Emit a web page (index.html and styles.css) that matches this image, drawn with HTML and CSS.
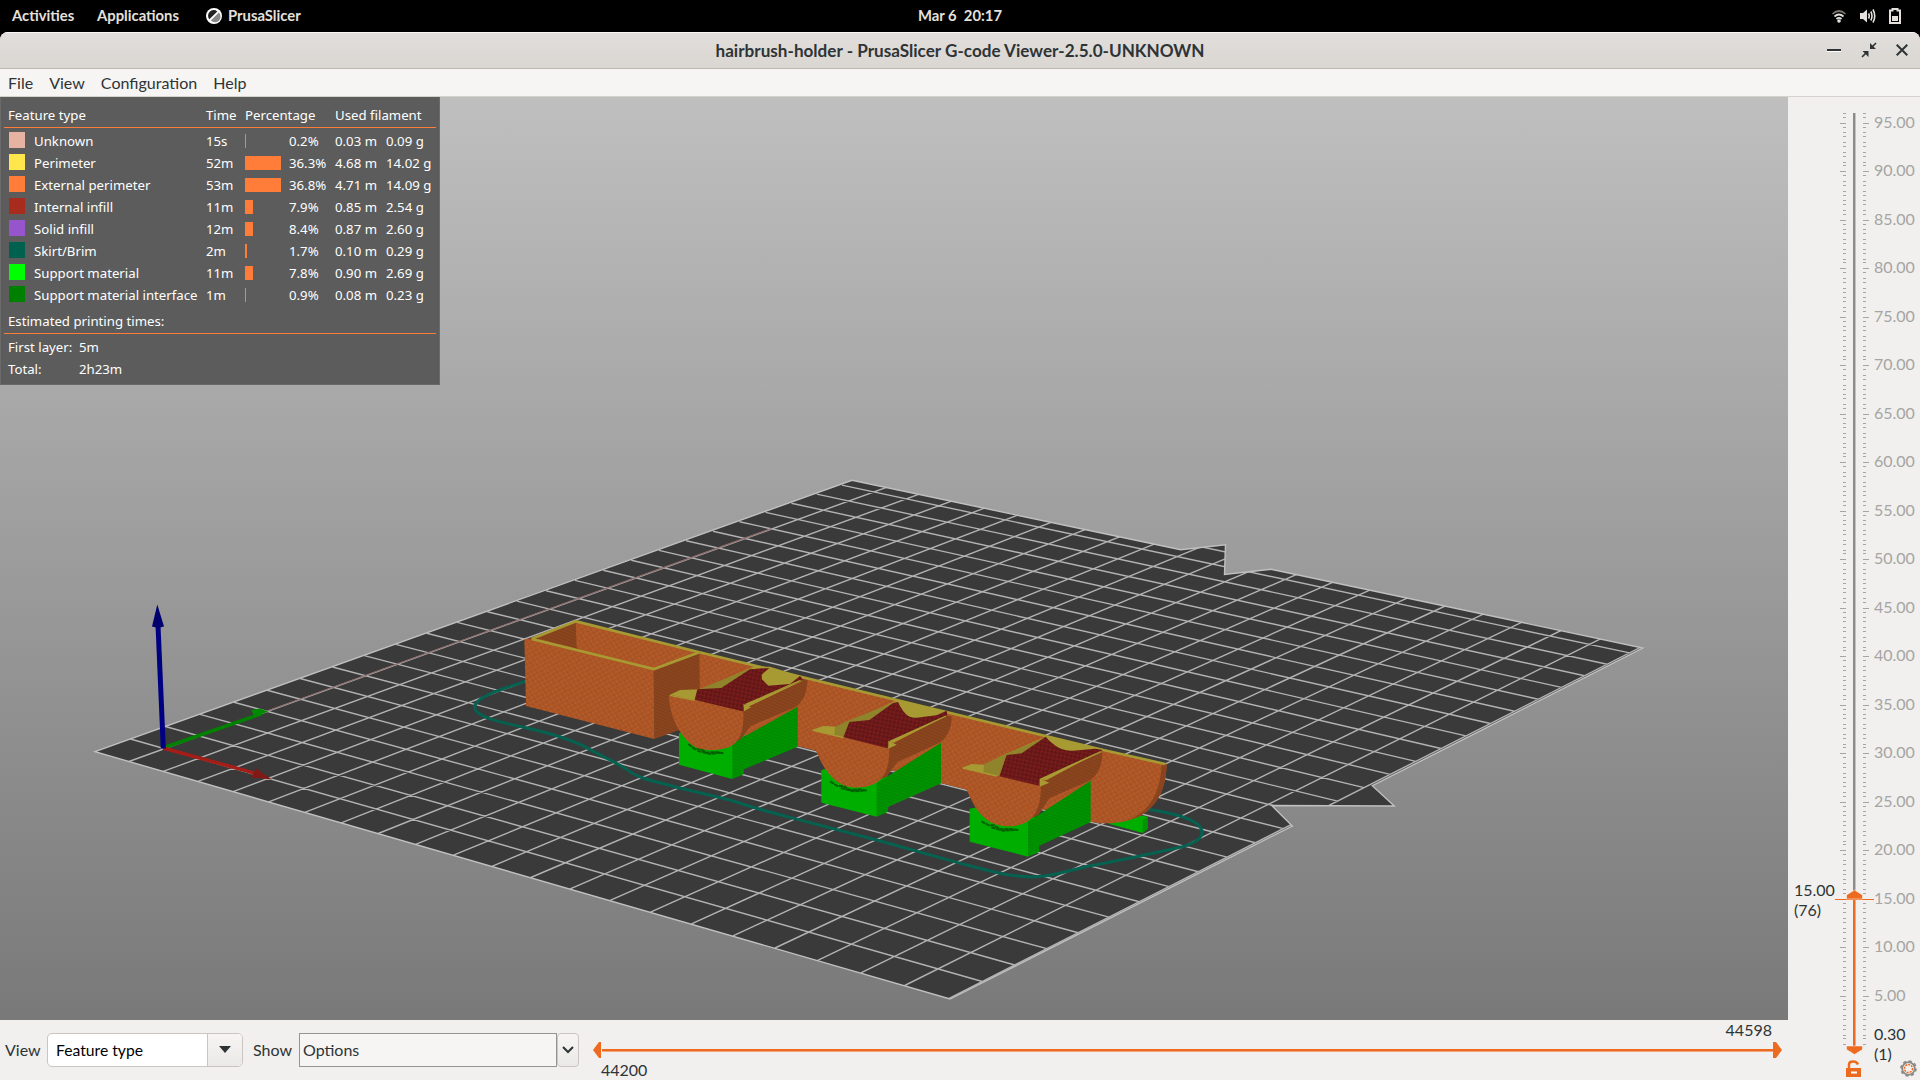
FILE: index.html
```html
<!DOCTYPE html>
<html lang="en">
<head>
<meta charset="utf-8">
<title>hairbrush-holder - PrusaSlicer G-code Viewer</title>
<link rel="stylesheet" href="styles.css">
</head>
<body>
<header class="topbar">
  <nav class="topbar-left">
    <span class="activities">Activities</span>
    <span class="applications">Applications</span>
    <span class="app">
      <svg width="16" height="16" viewBox="0 0 16 16"><circle cx="8" cy="8" r="8" fill="#fff"/><path d="M3.400 11.300A5.600 5.600 0 0 1 11.300 3.400z" fill="#222"/><path d="M4.800 12.600 12.900 4.600A5.600 5.600 0 0 1 4.800 12.600z" fill="#888"/></svg>
      PrusaSlicer</span>
  </nav>
  <div class="clock">Mar 6&nbsp; 20:17</div>
  <div class="tray">
    <svg width="16" height="16" viewBox="0 0 16 16" fill="none" stroke="#e4e0dc" stroke-width="1.7"><path d="M1.500 6Q8 0 14.500 6" stroke="#77736f"/><path d="M3.500 8.500Q8 4.500 12.500 8.500"/><path d="M5.500 11Q8 8.800 10.500 11"/><circle cx="8" cy="13" r="1.800" fill="#e4e0dc" stroke="none"/></svg>
    <svg width="16" height="16" viewBox="0 0 16 16" fill="none" stroke="#e4e0dc" stroke-width="1.600"><path d="M0 5h3L7 1.500v13L3 11H0z" fill="#e4e0dc" stroke="none"/><path d="M8.500 5.500Q10 8 8.500 10.500M10.800 3.500Q13.200 8 10.800 12.500M13 1.500Q16.500 8 13 14.500"/></svg>
    <svg width="12" height="16" viewBox="0 0 12 16"><path d="M1 2.500h2.500V1h5v1.500H11V15H1z" fill="none" stroke="#e4e0dc" stroke-width="2"/><path d="M3 8h6v5H3z" fill="#e4e0dc"/></svg>
  </div>
</header>
<main class="window">
  <div class="titlebar">
    <h1>hairbrush-holder - PrusaSlicer G-code Viewer-2.5.0-UNKNOWN</h1>
    <div class="controls">
      <svg width="14" height="16" viewBox="0 0 14 16"><path d="M0 7h14v2H0z" fill="#2e3436"/><path d="M0 9h14v1H0z" fill="#fff"/></svg>
      <svg width="16" height="16" viewBox="0 0 16 16" fill="#2e3436" stroke="#2e3436" stroke-width="1.600"><path d="M9 1v6h6zM1.500 9h6v6z" stroke="none"/><path d="M10.500 5.500 15 1M1 15l4.500-4.500"/></svg>
      <svg width="12" height="16" viewBox="0 0 12 16"><path d="M.7 2.700 11.300 13.300M11.300 2.700.7 13.300" stroke="#2e3436" stroke-width="2"/></svg>
    </div>
  </div>
  <nav class="menubar"><span>File</span><span>View</span><span>Configuration</span><span>Help</span></nav>
  <div class="content">
    <section class="viewport">
      <svg class="scene" width="1788" height="923" viewBox="0 97 1788 923">
        <defs>
          <pattern id="speck" width="19" height="17" patternUnits="userSpaceOnUse" patternTransform="rotate(14)">
            <path d="M1 2h3v3H1zM11 10h3v3h-3z" fill="#d58a5e" opacity=".45"/><path d="M10 2h3v3h-3zM3 11h3v3H3z" fill="#743b1b" opacity=".45"/>
          </pattern>
          <pattern id="hatch" width="12" height="9" patternUnits="userSpaceOnUse" patternTransform="rotate(22)"><path d="M0 2h12" stroke="#703617" stroke-width="2.500" opacity=".55"/></pattern>
          <pattern id="ribs" width="12" height="9" patternUnits="userSpaceOnUse" patternTransform="rotate(18)"><path d="M0 2h12" stroke="#007c00" stroke-width="2.500" opacity=".6"/></pattern>
          <pattern id="mesh" width="12" height="12" patternUnits="userSpaceOnUse" patternTransform="rotate(12)"><path d="M1 1h4v4H1z" fill="#3e1010"/><path d="M7 6h4v4H7z" fill="#932020"/></pattern>
          <clipPath id="bedclip"><path d="M95 751.700 852 480.300 1180.700 549.700 1225.500 544.800 1224.500 574.500 1271 569.300 1642.700 648 1372.300 785.700 1394.300 806 1271.700 805.500 1292.300 826 950 999z"/></clipPath>
        </defs>
        <path class="bed" d="M95 751.700 852 480.300 1180.700 549.700 1225.500 544.800 1224.500 574.500 1271 569.300 1642.700 648 1372.300 785.700 1394.300 806 1271.700 805.500 1292.300 826 950 999z"/>
        <path id="grid" class="grid" clip-path="url(#bedclip)"/>
        <path class="bed-edge" d="M95 751.700 852 480.300 1180.700 549.700 1225.500 544.800 1224.500 574.500 1271 569.300 1642.700 648 1372.300 785.700 1394.300 806 1271.700 805.500 1292.300 826 950 999z"/>
        <path class="travel" d="M266 711.500 771.500 528.500"/>
        <g class="axes">
          <path d="M163 748 262 713.500" stroke="#008200" stroke-width="3.500"/><path d="M251 710 260 708.500 268 711.500 255 717z" fill="#008a00"/>
          <path d="M163 748 258 774" stroke="#a51d18" stroke-width="3.500"/><path d="M251 777.500 256 768.500 272 779.500z" fill="#7f1a17"/>
          <path d="M163.300 748.500 158 625" stroke="#000082" stroke-width="5"/><path d="M152 626.500 157.300 604.500 164 626.500 158 628z" fill="#00006e"/>
        </g>
        <g transform="translate(460 600) scale(.33333)">
          <path class="skirt" d="M196 244C110 272 45 292 44 322C46 352 130 368 200 384C290 404 340 420 385 446C440 476 470 488 500 508C540 540 600 546 650 562L810 600"/>
        </g>
        <g transform="translate(780 640) scale(.33333)">
          <path class="skirt" d="M-150 480C-90 500-30 517 30 532L290 600L520 664C600 685 680 711 760 711C840 708 880 684 950 674L1080 648L1200 622C1240 612 1268 598 1266 574C1262 538 1180 520 1105 508"/>
          <!-- rear plate -->
          <path class="green" d="M985 551 1045 520 1104 530 1103 566 1088 579z"/><path class="green-side" d="M1088 540 1104 530 1103 566 1088 579z"/>
          <path class="orange" d="M-615-58-245 34 350 178 970 328 1160 372C1158 450 1130 500 1080 528C1040 548 985 556 930 545L485 430 53 318-300 250-615 20z"/>
          <path class="speck" d="M-615-58-245 34 350 178 970 328 1160 372C1158 450 1130 500 1080 528C1040 548 985 556 930 545L485 430 53 318-300 250-615 20z"/>
          <path class="dark" d="M1145 376 1160 373C1158 450 1130 500 1080 528L1040 543C1110 515 1140 460 1145 376z"/>
          <path class="rim" d="M-612-56-245 36 350 180 970 330 1156 372"/>
        </g>
        <g transform="translate(460 600) scale(.33333)">
          <!-- box -->
          <path class="dark" d="M580 208 718 156 720 366 658 390 583 417z"/><path class="hatch" d="M580 208 718 156 720 366 658 390 583 417z"/>
          <path class="dark" d="M200 118 347 62 350 150z"/><path class="hatch" d="M200 118 347 62 350 150z"/>
          <path class="orange" d="M193 117 240 118 580 204 583 417 198 318z"/><path class="speck" d="M193 117 240 118 580 204 583 417 198 318z"/>
          <path class="rim" d="M215 116 350 63M215 117 582 207 718 157"/>
          <!-- first holder -->
          <path class="green" d="M657 400 700 380 860 380 817 537 657 494z"/>
          <path class="green-side" d="M817 430 1013 320V440L852 508 850 523 817 537z"/><path class="ribs" d="M817 430 1013 320V440L852 508 850 523 817 537z"/>
          <path class="contact" d="M685 432 705 448 722 446 740 458 765 456 790 460M712 452 750 462 780 458"/>
          <path class="dark" d="M850 328 1022 238 1043 240C1040 280 1030 310 1000 324L872 378 840 420 800 430z"/><path class="hatch" d="M850 328 1022 238 1043 240C1040 280 1030 310 1000 324L872 378 840 420 800 430z"/>
          <path class="orange" d="M626 285 710 300 850 334C852 380 845 425 810 440C770 455 715 455 690 430C655 400 630 350 626 285z"/><path class="speck" d="M626 285 710 300 850 334C852 380 845 425 810 440C770 455 715 455 690 430C655 400 630 350 626 285z"/>
          <path class="yellow" d="M630 284 660 270 725 268 880 200 930 200 1028 230 1028 242 855 325 704 300z"/>
          <path class="olive" d="M712 270 880 202 870 212 784 264z"/>
          <path class="red" d="M704 299 712 268 784 264 870 208 928 204 905 224 906 238 925 257 990 252 1020 228 1030 240 862 310 848 334z"/><path class="mesh" d="M704 299 712 268 784 264 870 208 928 204 905 224 906 238 925 257 990 252 1020 228 1030 240 862 310 848 334z"/>
          <path class="yellow" d="M850 312 873 322 852 334z"/><path class="rim thin" d="M630 286 704 301M855 314 1022 241"/>
        </g>
        <g transform="translate(780 640) scale(.33333)">
          <!-- second holder -->
          <path class="green" d="M124 390 160 380 330 380 290 530 124 488z"/>
          <path class="green-side" d="M290 430 483 308V430L325 500 323 516 290 530z"/><path class="ribs" d="M290 430 483 308V430L325 500 323 516 290 530z"/>
          <path class="contact" d="M150 424 172 438 190 438 210 450 235 448 262 452M182 444 220 454 250 452"/>
          <path class="dark" d="M326 318 498 226 515 230C515 270 495 300 475 310L352 366 320 410 280 425z"/><path class="hatch" d="M326 318 498 226 515 230C515 270 495 300 475 310L352 366 320 410 280 425z"/>
          <path class="orange" d="M88 272 190 292 328 325C328 370 322 405 290 428C250 450 190 450 155 410C125 380 115 345 104 325L90 305z"/><path class="speck" d="M88 272 190 292 328 325C328 370 322 405 290 428C250 450 190 450 155 410C125 380 115 345 104 325L90 305z"/>
          <path class="yellow" d="M96 270 130 258 180 260 352 180 500 216 500 228 340 308 190 292z"/>
          <path class="olive" d="M165 262 200 244 350 184 338 192 268 240 208 246 190 290 163 284z"/>
          <path class="red" d="M190 291 208 246 268 240 338 190 354 186C370 220 385 236 410 233L470 226 500 212 502 226 332 302 322 325z"/><path class="mesh" d="M190 291 208 246 268 240 338 190 354 186C370 220 385 236 410 233L470 226 500 212 502 226 332 302 322 325z"/>
          <path class="yellow" d="M325 302 350 314 325 326z"/><path class="rim thin" d="M98 271 190 293M330 304 498 228"/>
          <!-- third holder -->
          <path class="green" d="M569 506 600 500 770 500 744 650 569 605z"/>
          <path class="green-side" d="M744 545 932 422V546L778 617 777 636 744 650z"/><path class="ribs" d="M744 545 932 422V546L778 617 777 636 744 650z"/>
          <path class="contact" d="M604 544 626 556 642 556 662 568 690 567 715 570M634 562 670 572 703 570"/>
          <path class="dark" d="M780 432 950 336 967 338C967 380 950 410 925 424L808 475 775 525 730 545z"/><path class="hatch" d="M780 432 950 336 967 338C967 380 950 410 925 424L808 475 775 525 730 545z"/>
          <path class="orange" d="M545 384 650 406 782 438C784 480 775 525 740 546C705 564 650 566 615 535C580 505 570 465 554 440z"/><path class="speck" d="M545 384 650 406 782 438C784 480 775 525 740 546C705 564 650 566 615 535C580 505 570 465 554 440z"/>
          <path class="yellow" d="M546 383 575 372 612 374 670 345 797 290 955 326 968 330 800 420 658 408z"/>
          <path class="olive" d="M612 374 670 345 797 292 725 340 680 345 658 408 610 397z"/>
          <path class="red" d="M658 409 680 345 725 340 797 290C820 318 850 335 880 332L945 326 968 330 780 416 778 437z"/><path class="mesh" d="M658 409 680 345 725 340 797 290C820 318 850 335 880 332L945 326 968 330 780 416 778 437z"/>
          <path class="yellow" d="M779 416 808 428 779 440z"/><path class="rim thin" d="M548 384 650 408M782 418 962 336"/>
        </g>
      </svg>
      <div class="legend">
        <div class="legend-head"><span>Feature type</span><span>Time</span><span>Percentage</span><span>Used filament</span></div>
        <div id="rows"></div>
        <div class="legend-sub">Estimated printing times:</div>
        <div class="times"><span>First layer:</span><span>5m</span><span>Total:</span><span>2h23m</span></div>
      </div>
    </section>
    <footer class="bottombar">
      <label>View</label>
      <div class="combo"><span>Feature type</span><i><svg width="12" height="8" viewBox="0 0 12 8"><path d="M0 0h12L6 7z" fill="#2e3436"/></svg></i></div>
      <label class="show">Show</label>
      <div class="options">Options</div>
      <div class="chev"><svg width="12" height="8" viewBox="0 0 12 8"><path d="M1 1l5 5 5-5" fill="none" stroke="#2e3436" stroke-width="2"/></svg></div>
      <div class="moves">
        <span class="moves-max">44598</span>
        <svg width="1190" height="18" viewBox="0 0 1190 18"><path d="M9 9.500h1171" stroke="#f3a679" stroke-width="3"/><path d="M9 9h1171" stroke="#ed6b21" stroke-width="2"/><path d="M8 1H6L0 9l6 8h2z M1180 1h3l6 8-6 8h-3z" fill="#ed6b21"/></svg>
        <span class="moves-min">44200</span>
      </div>
    </footer>
  </div>
  <aside class="layers">
    <svg width="132" height="983" viewBox="1788 97 132 983">
      <path id="ticks" stroke="#a5a5a3" stroke-width="1"/>
      <path d="M1854 113v780" stroke="#8b8b89" stroke-width="2"/><path d="M1855.500 113v780" stroke="#c4c3c2" stroke-width="1"/>
      <path d="M1854.500 897v150" stroke="#f3a679" stroke-width="3"/><path d="M1854 897v150" stroke="#ed6b21" stroke-width="2"/>
      <path d="M1835 899.500h39" stroke="#ed6b21"/>
      <path d="M1846.500 899v-4l8-5 8 5v4zM1846.500 1046h16v3.500l-8 5-8-5z" fill="#ed6b21" stroke="#fff" stroke-width=".5"/>
      <g id="labels" class="tick-label"></g>
      <g class="value"><text x="1794" y="896">15.00</text><text x="1794" y="916">(76)</text><text x="1874" y="1040">0.30</text><text x="1874" y="1060">(1)</text></g>
      <path d="M1849 1069v-4.500q0-3 4-3t5 3" fill="none" stroke="#ed6b21" stroke-width="2.500"/><path d="M1846 1068h15v9h-15z" fill="#ed6b21"/><path d="M1851 1072.500h6" stroke="#fff" stroke-width="2"/>
      <circle cx="1908.500" cy="1068.500" r="6.300" fill="none" stroke="#8a8a8a" stroke-width="1.800"/><circle cx="1908.500" cy="1068.500" r="7.300" fill="none" stroke="#8a8a8a" stroke-width="2" stroke-dasharray="3 2.730"/><circle cx="1908.500" cy="1068.500" r="4" fill="none" stroke="#ed6b21" stroke-width="1.400" stroke-dasharray="2 1"/>
    </svg>
  </aside>
</main>
<script src="script.js"></script>
</body>
</html>
```
FILE: styles.css
```css
* { box-sizing: border-box; }
body { margin: 0; width: 1920px; height: 1080px; overflow: hidden; background: #000; display: flex; flex-direction: column; font: 16px/20px Lato, "Noto Sans", sans-serif; color: #2e3436; }
svg { display: block; flex: none; }
.topbar { height: 32px; color: #e4e0dc; display: grid; grid-template-columns: 1fr auto 1fr; align-items: center; font-weight: 700; font-size: 14.8px; padding-bottom: 2px; }
.topbar svg { margin-top: 2px; }
.topbar-left { display: flex; padding-left: 12px; }
.activities { width: 85px; }
.applications { width: 109px; }
.app { display: flex; align-items: center; gap: 6px; }
.tray { display: flex; justify-content: flex-end; gap: 13px; padding-right: 19px; }
.window { flex: 1; display: grid; grid-template: 37px 28px 983px / 1788px 132px; background: #f1f0ee; border-radius: 8px 8px 0 0; overflow: hidden; }
.titlebar { grid-column: 1 / 3; display: grid; grid-template-columns: 1fr auto 1fr; align-items: center; background: linear-gradient(#e1dedb, #dad6d2); border-top: 1px solid #f8f7f6; border-bottom: 1px solid #bfb8b1; }
.titlebar h1 { grid-column: 2; margin: 0; font-size: 17.12px; line-height: 20px; font-weight: 700; }
.controls { display: flex; justify-content: flex-end; gap: 19.5px; padding-right: 12px; margin-top: -1px; }
.menubar { grid-column: 1 / 3; background: #f6f5f3; border-bottom: 1px solid #d5d1cd; display: flex; gap: 16px; padding: 4px 8px; font-size: 16.05px; }
.content { display: flex; flex-direction: column; }
.viewport { height: 923px; position: relative; background: linear-gradient(#bfbfbf, #797979); }
.bed { fill: #3a3a3a; }
.grid { fill: none; stroke: #b2b2b2; stroke-width: 1.4; }
.bed-edge { fill: none; stroke: #c0c0c0; stroke-width: 1.4; }
.travel { stroke: #8d6c6c; stroke-width: 1.3; }
.skirt { fill: none; stroke: #056150; stroke-width: 9; }
.orange { fill: #ad5525; }
.dark { fill: #8a451e; }
.green { fill: #00ae00; }
.green-side { fill: #009300; }
.red { fill: #6e1919; }
.yellow { fill: #a89a33; }
.olive { fill: #8f832b; }
.rim { fill: none; stroke: #a89a33; stroke-width: 8; }
.thin { stroke-width: 4; }
.contact { fill: none; stroke: #006000; stroke-width: 6; stroke-dasharray: 13 2; }
.speck { fill: url(#speck); }
.hatch { fill: url(#hatch); }
.ribs { fill: url(#ribs); }
.mesh { fill: url(#mesh); opacity: .7; }
.legend { position: absolute; left: 0; top: 0; width: 440px; height: 288px; background: #5c5c5c; border: 1px solid #6a6a6a; border-top: 0; padding: 8px 3px 0; color: #fff; font: 13.23px/20px "Noto Sans", sans-serif; }
.legend-head { display: grid; grid-template-columns: 198px 39px 90px 1fr; padding-left: 4px; height: 23px; border-bottom: 1px solid #ff7d38; margin-bottom: 2px; }
.row { display: grid; grid-template-columns: 26px 172px 39px 44px 46px 51px 1fr; padding-left: 4px; height: 22px; align-items: center; }
.swatch { width: 16px; height: 16px; margin: -3px 0 0 1px; }
.bar { height: 14px; background: #ff7d38; margin-top: -1px; }
.legend-sub { height: 23px; margin-top: 5px; padding-left: 4px; border-bottom: 1px solid #ff7d38; }
.times { display: grid; grid-template-columns: 71px 1fr; padding: 2px 0 0 4px; line-height: 22px; }
.bottombar { height: 60px; display: flex; align-items: center; padding-left: 5px; }
.bottombar label { width: 42px; }
.bottombar .show { width: 46px; margin-left: 10px; }
.combo { width: 196px; height: 34px; display: flex; border: 1px solid #cac5c0; border-radius: 5px; overflow: hidden; background: #fff; color: #000; }
.combo span { flex: 1; padding: 6px 8px; font-size: 15.7px; }
.combo i { width: 35px; border-left: 1px solid #cac5c0; background: linear-gradient(#f6f5f3, #ebe9e7); display: flex; align-items: center; justify-content: center; }
.options { width: 258px; height: 34px; border: 1px solid #929496; background: #f6f5f3; padding: 6px 3px; }
.chev { width: 22px; height: 34px; border: 1px solid #cac5c0; border-radius: 4px; background: linear-gradient(#f6f5f3, #ebe9e7); display: flex; align-items: center; justify-content: center; }
.moves { margin-left: 14px; display: flex; flex-direction: column; width: 1190px; padding-top: 2px; }
.moves-max { align-self: flex-end; margin: -1px 11px 1px 0; line-height: 20px; }
.moves-min { margin-left: 8px; line-height: 22px; }
.tick-label { fill: #a5a5a3; }
.value { fill: #2e3436; }
```
FILE: script.js
```js
// Bed plane to screen: projective map of 10 mm cells.
function project(u, v) {
  const w = 1 - 0.00600 * u + 0.00794 * v;
  return [(95 + 33.13 * u + 36.56 * v) / w, (751.7 + 5.22 * u - 6.81 * v) / w];
}
let d = '';
const seg = (a, b) => { d += `M${a[0].toFixed(1)} ${a[1].toFixed(1)}L${b[0].toFixed(1)} ${b[1].toFixed(1)}`; };
for (let u = 1; u <= 22; u++) seg(project(u, 0), project(u, 28));
for (let v = 1; v <= 26; v++) seg(project(0, v), project(22, v));
document.getElementById('grid').setAttribute('d', d);

let t = 'M1843 113.500h3M1863 113.500h3M1843 117.500h3M1863 117.500h3';
let labels = '';
const steps = [0, 4, 9.5, 13.5, 19.5, 23.5, 29, 33, 39, 42.5];
for (let i = 0; i < 20; i++) {
  const y = 123.2 + i * 48.5;
  steps.forEach((s, k) => {
    const yy = Math.floor(y + s) + 0.5;
    if (yy > 1047) return;
    t += k || i === 19 ? `M1843 ${yy}h3M1863 ${yy}h3` : `M1840 ${yy}h6M1863 ${yy}h6`;
  });
  if (i < 19) labels += `<text x="1874" y="${Math.round(y + 4.7)}">${(95 - i * 5).toFixed(2)}</text>`;
}
document.getElementById('ticks').setAttribute('d', t);
document.getElementById('labels').innerHTML = labels;

const rows = [
  ['#e6b3a3', 'Unknown', '15s', 1, '0.2%', '0.03 m', '0.09 g'],
  ['#ffe64d', 'Perimeter', '52m', 35.5, '36.3%', '4.68 m', '14.02 g'],
  ['#ff7d38', 'External perimeter', '53m', 36, '36.8%', '4.71 m', '14.09 g'],
  ['#a82c1e', 'Internal infill', '11m', 7.5, '7.9%', '0.85 m', '2.54 g'],
  ['#9655cc', 'Solid infill', '12m', 8.3, '8.4%', '0.87 m', '2.60 g'],
  ['#00614f', 'Skirt/Brim', '2m', 1.7, '1.7%', '0.10 m', '0.29 g'],
  ['#00ff00', 'Support material', '11m', 7.5, '7.8%', '0.90 m', '2.69 g'],
  ['#008000', 'Support material interface', '1m', 1, '0.9%', '0.08 m', '0.23 g']
];
document.getElementById('rows').innerHTML = rows.map(r =>
  `<div class="row"><i class="swatch" style="background:${r[0]}"></i><span>${r[1]}</span><span>${r[2]}</span><i class="bar" style="width:${r[3]}px"></i><span>${r[4]}</span><span>${r[5]}</span><span>${r[6]}</span></div>`).join('');
```
